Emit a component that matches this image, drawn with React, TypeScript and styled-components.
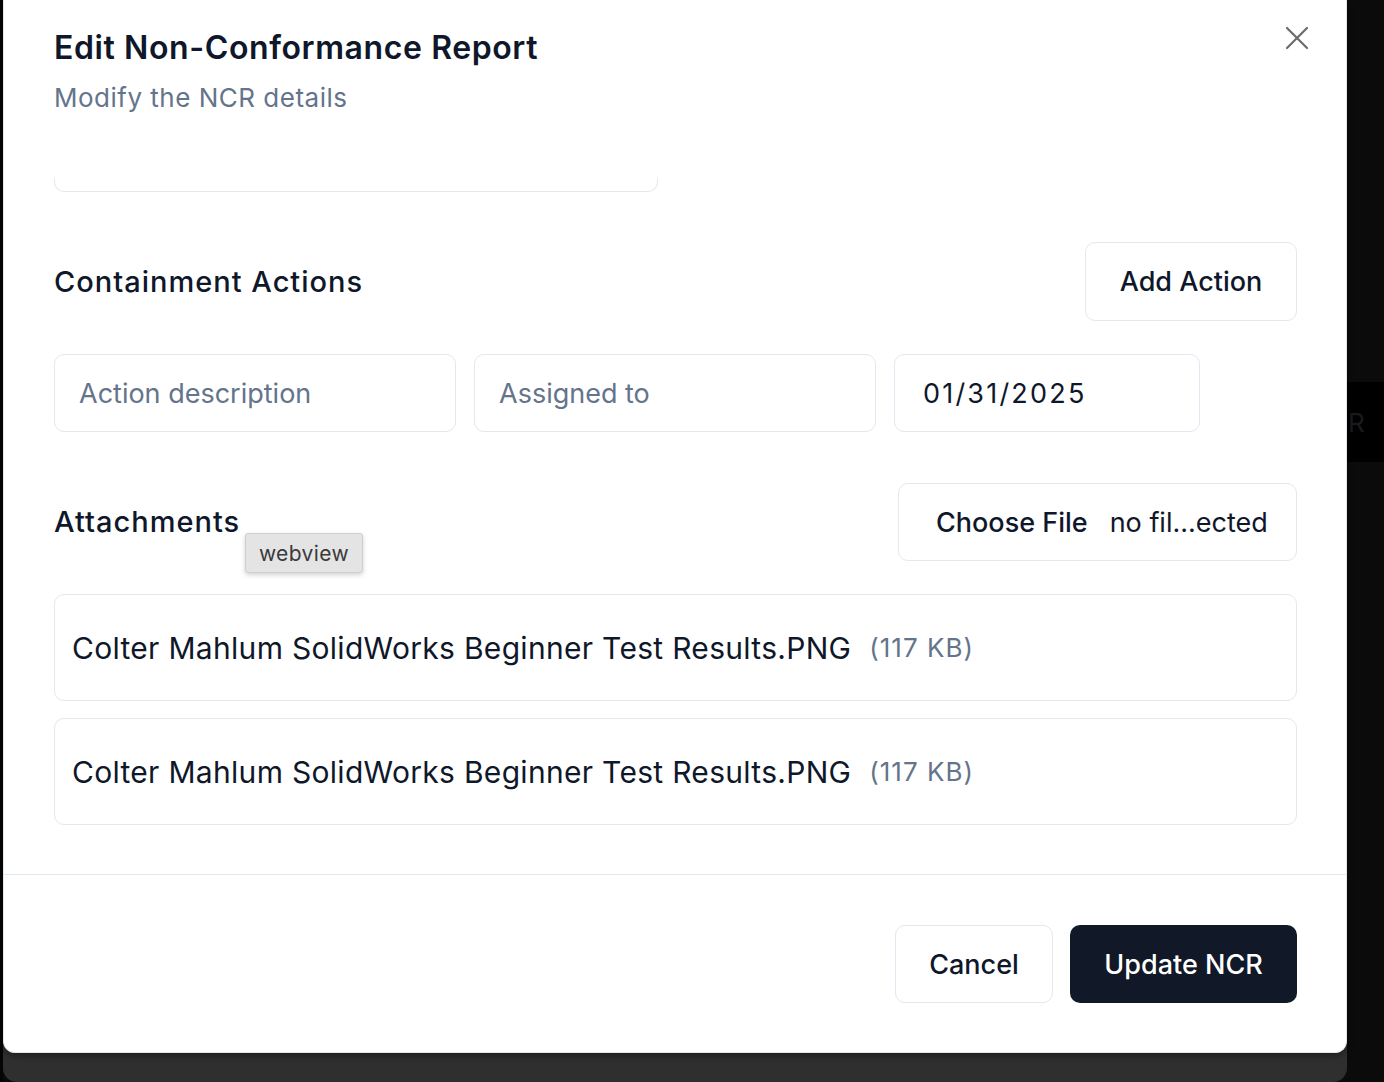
import React from "react";
import styled, { createGlobalStyle } from "styled-components";

const Global = createGlobalStyle`
  html, body { margin: 0; padding: 0; background: #0b0b0b; }
  body { font-family: Inter, "Noto Sans", sans-serif; overflow: hidden; -webkit-font-smoothing: antialiased; }
  * { box-sizing: border-box; }
`;

const Screen = styled.div`
  display: flex;
  width: 1384px;
  height: 1082px;
  overflow: hidden;
  background: #0b0b0b;
`;

const LeftEdge = styled.div`
  width: 3px;
  flex: none;
  background: #050505;
`;

const Backdrop = styled.div`
  width: 1344px;
  flex: none;
  height: 1082px;
  background: #2f2f2f;
  border-radius: 0 0 14px 14px;
  display: flex;
  flex-direction: column;
`;

const Dialog = styled.div`
  position: relative;
  height: 1053px;
  background: #ffffff;
  border: 1px solid #e2e8f0;
  border-top: none;
  border-radius: 0 0 12px 12px;
  display: flex;
  flex-direction: column;
  box-shadow: 0 3px 6px rgba(0, 0, 0, 0.35);
`;

const Header = styled.header`
  padding: 29px 49px 0 50px;
  display: flex;
  flex-direction: column;
  gap: 14px;
`;

const Title = styled.h2`
  margin: 0;
  font-size: 32px;
  line-height: 37px;
  font-weight: 600;
  letter-spacing: 0.6px;
  color: #0f172a;
`;

const Subtitle = styled.p`
  margin: 0;
  font-size: 26px;
  line-height: 35px;
  letter-spacing: 0.5px;
  color: #64748b;
`;

const CloseButton = styled.button`
  position: absolute;
  top: 18px;
  right: 29px;
  width: 40px;
  height: 40px;
  padding: 0;
  border: none;
  background: transparent;
  color: #6b6b6b;
  display: flex;
  align-items: center;
  justify-content: center;
`;

const Body = styled.div`
  flex: 1;
  padding: 0 49px 0 50px;
  display: flex;
  flex-direction: column;
`;

const PartialField = styled.div`
  margin-top: 63px;
  width: 604px;
  height: 14px;
  border: 1px solid #e2e8f0;
  border-top: none;
  border-radius: 0 0 10px 10px;
`;

const SectionRow = styled.div<{ $top: number }>`
  position: relative;
  margin-top: ${(p) => p.$top}px;
  display: flex;
  align-items: center;
  justify-content: space-between;
`;

const SectionTitle = styled.h3`
  margin: 0;
  font-size: 29px;
  line-height: 36px;
  font-weight: 500;
  letter-spacing: 1px;
  color: #0f172a;
`;

const OutlineButton = styled.button<{ $w: number }>`
  width: ${(p) => p.$w}px;
  height: 79px;
  border: 1px solid #e2e8f0;
  border-radius: 10px;
  background: #ffffff;
  color: #0f172a;
  font-family: inherit;
  font-size: 27px;
  font-weight: 500;
  display: flex;
  align-items: center;
  justify-content: center;
  padding: 0;
`;

const InputsRow = styled.div`
  margin-top: 33px;
  display: grid;
  grid-template-columns: 402px 402px 306px;
  gap: 18px;
`;

const TextInput = styled.input<{ $pad?: number }>`
  height: 78px;
  width: 100%;
  border: 1px solid #e2e8f0;
  border-radius: 10px;
  padding: 0 ${(p) => p.$pad ?? 24}px;
  font-family: inherit;
  font-size: 27px;
  color: #0f172a;
  background: #ffffff;
  outline: none;
  letter-spacing: ${(p) => (p.$pad ? "2.2px" : "0")};
  &::placeholder {
    color: #64748b;
  }
`;

const FileBox = styled.div`
  width: 399px;
  height: 78px;
  border: 1px solid #e2e8f0;
  border-radius: 10px;
  display: flex;
  align-items: center;
  padding-left: 37px;
  gap: 22px;
  font-size: 27px;
  color: #0f172a;
  white-space: nowrap;
`;

const FileButtonLabel = styled.span`
  font-weight: 500;
`;

const Tooltip = styled.div`
  position: absolute;
  left: 191px;
  top: 50px;
  width: 118px;
  height: 40px;
  background: #e4e4e4;
  border: 1px solid #cfcfcf;
  border-radius: 3px;
  box-shadow: 0 2px 5px rgba(0, 0, 0, 0.18);
  display: flex;
  align-items: center;
  justify-content: center;
  font-size: 21px;
  letter-spacing: 0.4px;
  color: #3a3a3a;
`;

const AttachmentList = styled.div`
  margin-top: 33px;
  display: flex;
  flex-direction: column;
  gap: 17px;
`;

const AttachmentItem = styled.div`
  height: 107px;
  border: 1px solid #e2e8f0;
  border-radius: 10px;
  display: flex;
  align-items: center;
  padding: 0 17px;
  gap: 18px;
`;

const FileName = styled.span`
  font-size: 30px;
  letter-spacing: 0.3px;
  color: #0f172a;
`;

const FileSize = styled.span`
  font-size: 26px;
  letter-spacing: 1px;
  color: #64748b;
`;

const Footer = styled.footer`
  border-top: 1px solid #e2e8f0;
  padding: 50px 49px 49px 50px;
  display: flex;
  justify-content: flex-end;
  gap: 17px;
`;

const PrimaryButton = styled.button`
  width: 227px;
  height: 78px;
  border: none;
  border-radius: 10px;
  background: #111827;
  color: #ffffff;
  font-family: inherit;
  font-size: 27px;
  font-weight: 500;
  padding: 0;
`;

const RightStrip = styled.div`
  flex: 1;
  display: flex;
  flex-direction: column;
  padding-top: 382px;
`;

const BehindBand = styled.div`
  height: 80px;
  background: #000000;
  display: flex;
  align-items: center;
  padding-left: 1px;
  font-size: 26px;
  color: #1a1a1a;
`;

const XIcon = () => (
  <svg width="40" height="40" viewBox="0 0 24 24" fill="none" stroke="currentColor" strokeWidth="1.3" strokeLinecap="round">
    <path d="M18 6 6 18" />
    <path d="m6 6 12 12" />
  </svg>
);

const attachments = [
  { name: "Colter Mahlum SolidWorks Beginner Test Results.PNG", size: "(117 KB)" },
  { name: "Colter Mahlum SolidWorks Beginner Test Results.PNG", size: "(117 KB)" },
];

export default function App() {
  return (
    <>
      <Global />
      <Screen>
        <LeftEdge />
        <Backdrop>
          <Dialog>
            <Header>
              <Title>Edit Non-Conformance Report</Title>
              <Subtitle>Modify the NCR details</Subtitle>
            </Header>
            <CloseButton aria-label="Close">
              <XIcon />
            </CloseButton>
            <Body>
              <PartialField />
              <SectionRow $top={50}>
                <SectionTitle>Containment Actions</SectionTitle>
                <OutlineButton $w={212}>Add Action</OutlineButton>
              </SectionRow>
              <InputsRow>
                <TextInput placeholder="Action description" readOnly />
                <TextInput placeholder="Assigned to" readOnly />
                <TextInput value="01/31/2025" $pad={28} readOnly />
              </InputsRow>
              <SectionRow $top={51}>
                <SectionTitle>Attachments</SectionTitle>
                <FileBox>
                  <FileButtonLabel>Choose File</FileButtonLabel>
                  <span>no fil...ected</span>
                </FileBox>
                <Tooltip>webview</Tooltip>
              </SectionRow>
              <AttachmentList>
                {attachments.map((a, i) => (
                  <AttachmentItem key={i}>
                    <FileName>{a.name}</FileName>
                    <FileSize>{a.size}</FileSize>
                  </AttachmentItem>
                ))}
              </AttachmentList>
            </Body>
            <Footer>
              <OutlineButton $w={158} style={{ height: 78 }}>Cancel</OutlineButton>
              <PrimaryButton>Update NCR</PrimaryButton>
            </Footer>
          </Dialog>
        </Backdrop>
        <RightStrip>
          <BehindBand>
            <span>R</span>
          </BehindBand>
        </RightStrip>
      </Screen>
    </>
  );
}
